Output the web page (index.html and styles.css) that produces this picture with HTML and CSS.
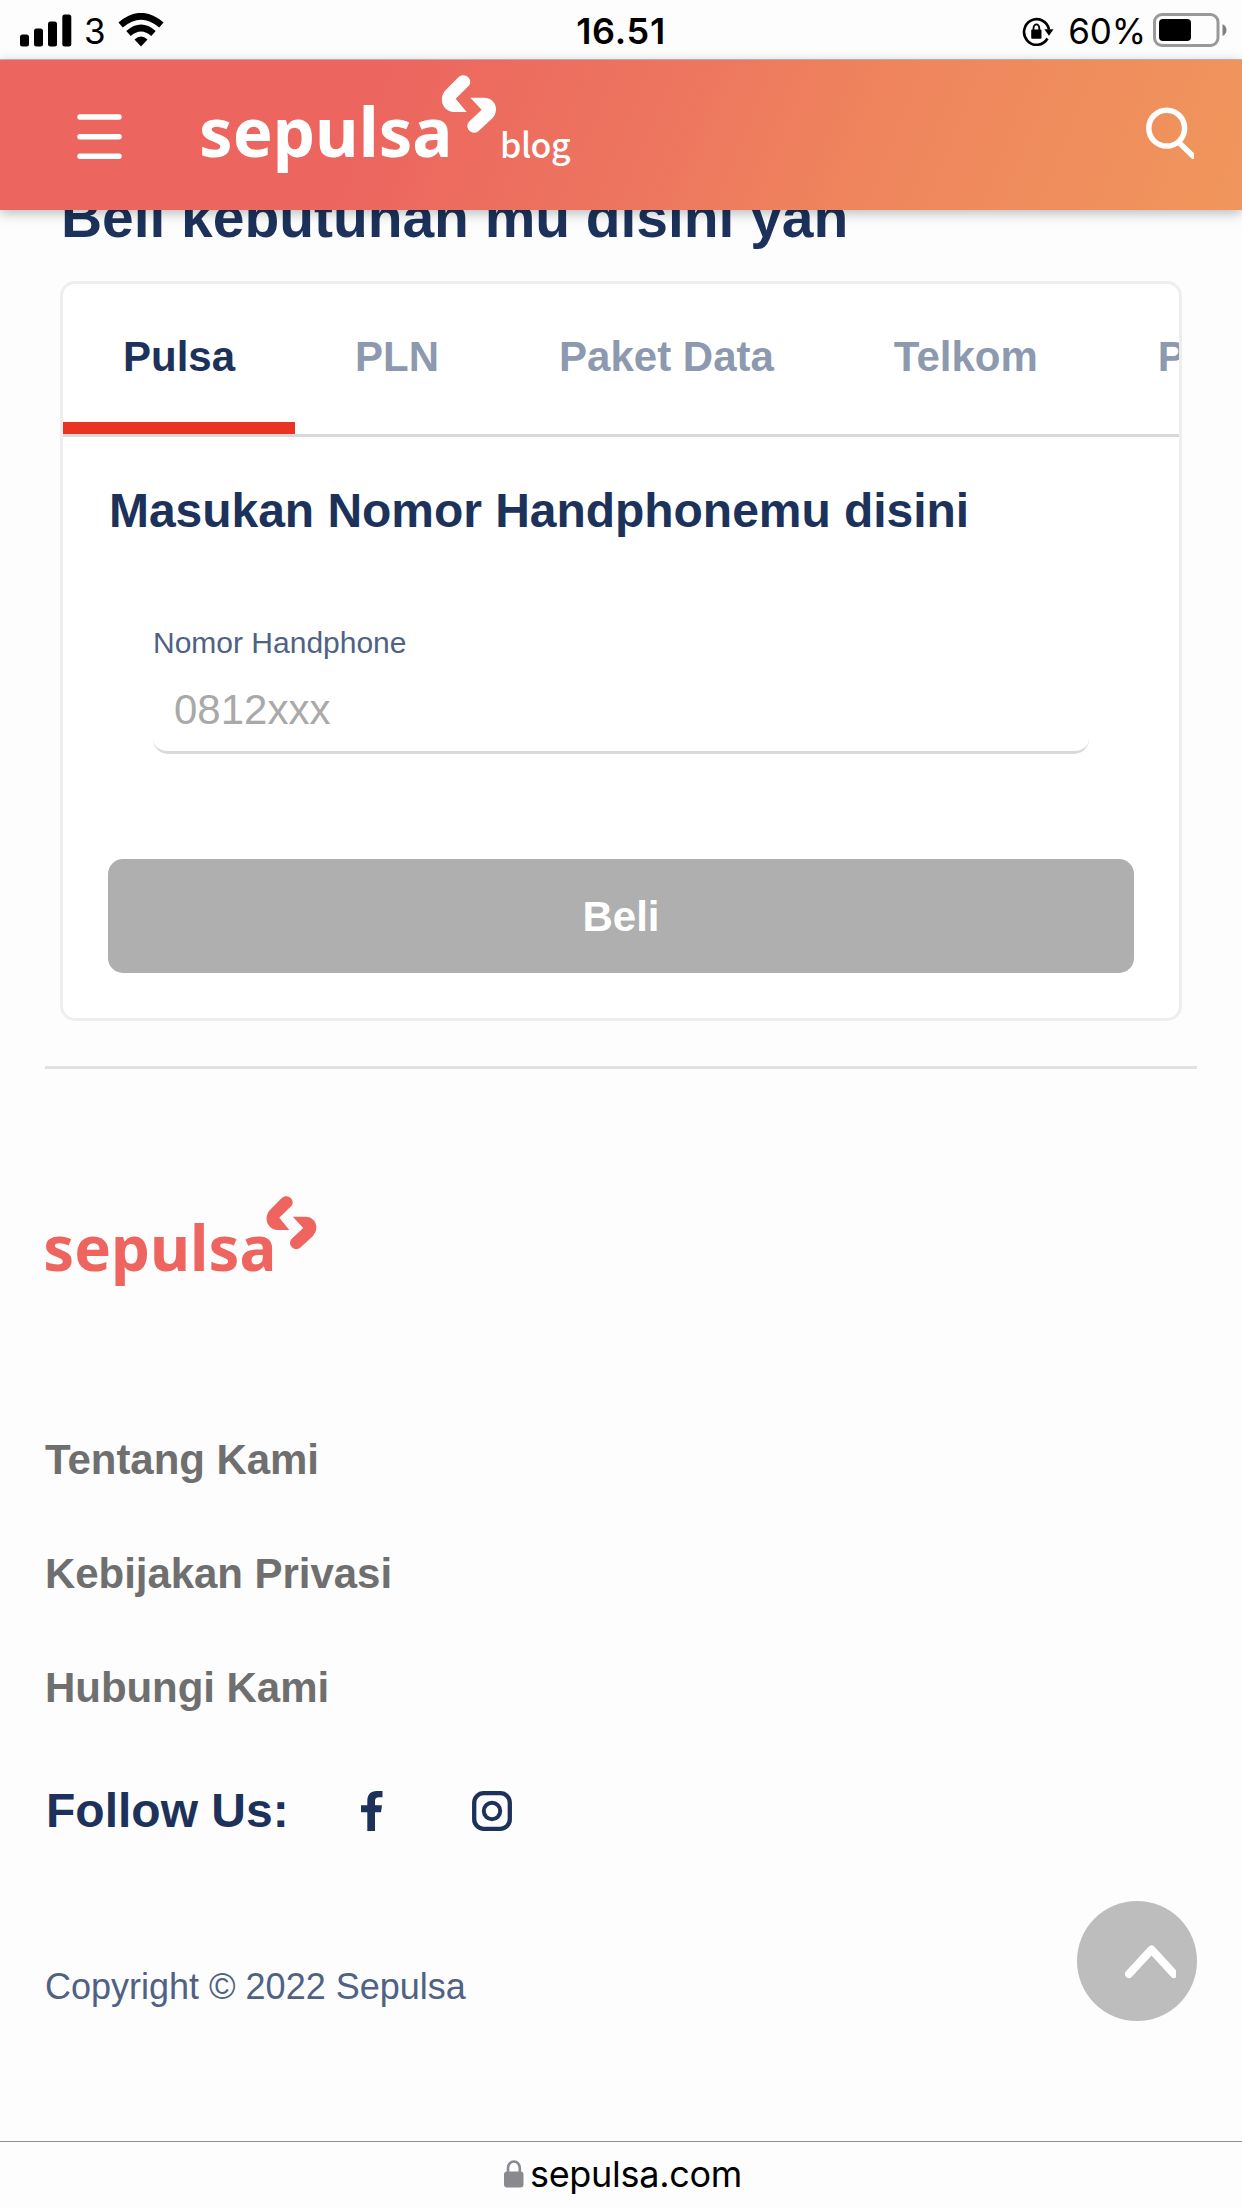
FILE: index.html
```html
<!DOCTYPE html>
<html lang="id">
<head>
<meta charset="utf-8">
<title>Sepulsa Blog</title>
<link rel="stylesheet" href="styles.css">
</head>
<body>
<svg class="defs" width="0" height="0" aria-hidden="true">
  <symbol id="logo" viewBox="201 75 296 98" overflow="visible">
    <text x="199" y="157" class="logo-word" textLength="253.500" lengthAdjust="spacingAndGlyphs">sepulsa</text>
    <path transform="translate(190 65) scale(.33333)" d="M806 36 C822 21 850 40 838 61 L797 101 L830 141 H795 C760 141 744 104 765 77 Z M841 98 H882 C916 98 930 136 907 160 L865 199 C848 213 822 191 836 171 L875 134 Z"/>
  </symbol>
</svg>
<div class="screen">
  <div class="statusbar">
    <div class="status-side">
      <svg class="signal" width="52" height="33" viewBox="0 0 52 33"><rect x="0" y="20.500" width="9" height="12" rx="2.500"/><rect x="14" y="14.500" width="9" height="18" rx="2.500"/><rect x="28" y="7.500" width="9" height="25" rx="2.500"/><rect x="42.300" y="0.500" width="9" height="32" rx="2.500"/></svg>
      <span class="carrier">3</span>
      <svg class="wifi" width="46" height="34" viewBox="0 0 46 34"><path d="M23 33.500 L16.500 26.500 Q23 20.500 29.500 26.500 Z"/><path class="arc" d="M10.500 20.500 Q23 9.500 35.500 20.500 M2.600 12 Q23 -5.500 43.400 12"/></svg>
    </div>
    <div class="clock">16.51</div>
    <div class="status-side status-right">
      <svg class="rotlock" width="32" height="32" viewBox="0 0 32 32"><path class="ring" d="M25.500 22.500 A12.600 12.800 0 1 1 27 13.500"/><path d="M22.300 13.300 H31.500 L27 19.800 Z"/><rect x="9.200" y="13.500" width="10.300" height="9.300" rx="1"/><path class="shackle" d="M11.500 15 V12 a2.900 3.600 0 0 1 5.800 0 V15"/></svg>
      <span class="percent">60%</span>
      <svg class="battery" width="75" height="36" viewBox="0 0 75 36"><rect x="1.500" y="2.500" width="63.500" height="31" rx="7.500" fill="none" stroke="#999" stroke-width="3"/><rect x="6" y="7" width="32" height="22" rx="4"/><path fill="#808080" d="M69.500 12 Q73.500 14 73.500 18 T69.500 24 Z"/></svg>
    </div>
  </div>

  <header class="header">
    <svg class="menu" width="45" height="46" viewBox="0 0 45 46"><path d="M3 3 H42 M3 22.700 H42 M3 42.300 H42"/></svg>
    <div class="brand">
      <svg class="brand-logo" width="296" height="98"><use href="#logo"/></svg>
      <span class="brand-sub">blog</span>
    </div>
    <svg class="search" width="48" height="52" viewBox="0 0 48 52"><circle cx="20.700" cy="21.200" r="17.900"/><path d="M33.500 36 L49 51"/></svg>
  </header>

  <main class="main">
    <h1 class="heading">Beli kebutuhan mu disini yah</h1>
    <section class="card">
      <nav class="tabs">
        <a class="tab active">Pulsa</a><a class="tab">PLN</a><a class="tab">Paket Data</a><a class="tab">Telkom</a><a class="tab">PDAM</a>
      </nav>
      <div class="panel">
        <h2 class="panel-title">Masukan Nomor Handphonemu disini</h2>
        <div class="field">
          <label class="label" for="phone">Nomor Handphone</label>
          <input class="input" id="phone" type="tel" placeholder="0812xxx">
        </div>
        <button class="buy">Beli</button>
      </div>
    </section>
  </main>

  <footer class="footer">
    <svg class="footer-logo" width="272.300" height="90.200"><use href="#logo"/></svg>
    <nav class="links">
      <a>Tentang Kami</a>
      <a>Kebijakan Privasi</a>
      <a>Hubungi Kami</a>
    </nav>
    <div class="follow">
      <span>Follow Us:</span>
      <svg class="facebook" width="22" height="40" viewBox="0 0 22 40"><path d="M6.300 40 V21.300 H0 V14.300 H6.300 V10 C6.300 3.500 9.800 0 15.500 0 H21.500 V6.300 H18 C15 6.300 14 7.700 14 10 V14.300 H21 L20 21.300 H14 V40 Z"/></svg>
      <svg class="instagram" width="41" height="40" viewBox="0 0 41 40"><rect x="2.200" y="2.200" width="35.600" height="35.600" rx="9.500" stroke-width="4.300"/><circle cx="20" cy="20" r="8.200" stroke-width="4"/></svg>
    </div>
    <p class="copyright">Copyright © 2022 Sepulsa</p>
    <button class="to-top" aria-label="Top"><svg width="51" height="36" viewBox="0 0 51 36"><path d="M4 29 L26.500 4.500 L49 29"/></svg></button>
  </footer>

  <div class="urlbar">
    <svg width="20" height="28" viewBox="0 0 20 28"><rect x="0" y="11.500" width="19.500" height="16" rx="3"/><path d="M4 13 V8 a5.900 6.500 0 0 1 11.800 0 V13" fill="none" stroke="#8a898e" stroke-width="2.600"/></svg>
    <span>sepulsa.com</span>
  </div>
</div>
</body>
</html>
```
FILE: styles.css
```css
* { box-sizing: border-box; }

body {
  margin: 0;
  background: #fdfdfd;
  font-family: "Liberation Sans", Arial, sans-serif;
  color: #1c325b;
}

h1, h2, p { margin: 0; }
svg { display: block; flex: none; }
.defs { position: absolute; }

.screen {
  display: flex;
  flex-direction: column;
  width: 1242px;
  height: 2208px;
  overflow: hidden;
}

.statusbar {
  display: flex;
  flex: none;
  justify-content: space-between;
  height: 60px;
  padding: 0 15px 0 20px;
  border-bottom: 1px solid #bfc0c2;
  font: 35px/62px Inter, sans-serif;
  color: #000;
}
.status-side { display: flex; flex: 1; }
.status-right { justify-content: flex-end; }
.signal { margin-top: 14px; }
.carrier { width: 20px; margin-left: 12px; }
.wifi { margin: 13px 0 0 14px; }
.wifi .arc { fill: none; stroke: #000; stroke-width: 6.600; }
.clock { margin-right: 5px; font-size: 36px; font-weight: 600; letter-spacing: .7px; }
.rotlock { margin: 16px 14px 0 0; }
.rotlock .ring { fill: none; stroke: #000; stroke-width: 2.600; }
.rotlock .shackle { fill: none; stroke: #000; stroke-width: 1.800; }
.percent { letter-spacing: -.1px; }
.battery { margin: 12px -1px 0 7px; }

.header {
  position: relative;
  z-index: 1;
  display: flex;
  flex: none;
  align-items: flex-start;
  height: 150px;
  padding: 0 48px 0 77px;
  background: linear-gradient(112deg, #ec655f 29%, #ed745f 51%, #ef855d 70%, #f0965c 100%);
  box-shadow: 0 3px 12px rgba(0, 0, 0, .28);
}
.menu { margin-top: 54px; fill: none; stroke: #fff; stroke-width: 5.500; stroke-linecap: round; }
.brand { display: flex; margin: 15px auto 0 79px; color: #fff; }
.logo-word { font: 700 68px "Noto Sans", sans-serif; }
.brand-logo, .footer-logo { overflow: visible; }
.brand-logo { fill: #fff; }
.brand-sub { margin: 41px 0 0 3px; font: 500 34px/56px "Noto Sans CJK SC", sans-serif; letter-spacing: -.5px; }
.search { margin-top: 47px; fill: none; stroke: #fff; stroke-width: 5.500; }

.main {
  flex: none;
  margin: -24px 45px 0;
  padding: 0 15px 45px;
  border-bottom: 3px solid #e1e1e1;
}
.heading { padding: 1px 0 0 1px; font-size: 57px; line-height: 60px; letter-spacing: -.05px; white-space: nowrap; }

.card {
  margin-top: 34px;
  border: 3px solid #eee;
  border-radius: 15px;
  background: #fff;
  overflow: hidden;
}
.tabs {
  display: flex;
  height: 153px;
  border-bottom: 3px solid #d9d9d9;
  overflow: hidden;
}
.tab {
  flex: none;
  padding: 48px 60px 0;
  font-size: 42px;
  font-weight: 700;
  line-height: 50px;
  color: #8d99af;
  white-space: nowrap;
}
.tab.active { border-bottom: 12px solid #e93323; color: #1c325b; }

.panel { padding: 44px 45px 45px; }
.panel-title { font-size: 48px; line-height: 60px; white-space: nowrap; text-indent: 1px; letter-spacing: -.04px; }
.field { display: flex; flex-direction: column; margin: 84px 45px 0; }
.label { font-size: 30px; line-height: 36px; color: #4f6284; }
.input {
  height: 80px;
  margin-top: 13px;
  padding: 0 21px 5px;
  border: 0 solid #d9d9d9;
  border-bottom-width: 3px;
  border-radius: 15px;
  background: #fff;
  font: 42px "Liberation Sans", Arial, sans-serif;
}
.input::placeholder { color: #a9a9a9; opacity: 1; }
.buy {
  display: block;
  width: 100%;
  height: 114px;
  margin-top: 105px;
  padding: 2px 0 0;
  border: 0;
  border-radius: 15px;
  background: #afafaf;
  font: 700 42px "Liberation Sans", Arial, sans-serif;
  color: #fff;
}

.footer { position: relative; flex: none; padding: 127px 45px 0; }
.footer-logo { fill: #ee655f; }
.links {
  display: flex;
  flex-direction: column;
  margin-top: 117px;
  font-size: 42px;
  font-weight: 700;
  line-height: 114px;
  letter-spacing: -.05px;
  color: #6f6f6f;
}
.follow {
  display: flex;
  align-items: center;
  margin-top: 36px;
  padding-left: 1px;
  font-size: 48px;
  font-weight: 700;
  line-height: 60px;
}
.facebook { margin-left: 72px; fill: #1c325b; }
.instagram { margin-left: 89px; fill: none; stroke: #1c325b; }
.copyright { margin-top: 121px; font-size: 36px; line-height: 50px; color: #4f6284; }

.to-top {
  position: absolute;
  right: 45px;
  bottom: -9px;
  display: flex;
  align-items: center;
  justify-content: flex-end;
  width: 120px;
  height: 120px;
  padding: 3px 21px 0 0;
  border: 0;
  border-radius: 50%;
  background: #bdbdbd;
}
.to-top path { fill: none; stroke: #fff; stroke-width: 8; stroke-linecap: round; stroke-linejoin: round; }

.urlbar {
  display: flex;
  justify-content: center;
  height: 67px;
  margin-top: auto;
  padding-left: 4px;
  border-top: 1px solid #8f8f8f;
  font: 36px/65px Inter, sans-serif;
  letter-spacing: -.3px;
  color: #000;
}
.urlbar svg { margin: 18px 6px 0 0; fill: #8a898e; }
```
